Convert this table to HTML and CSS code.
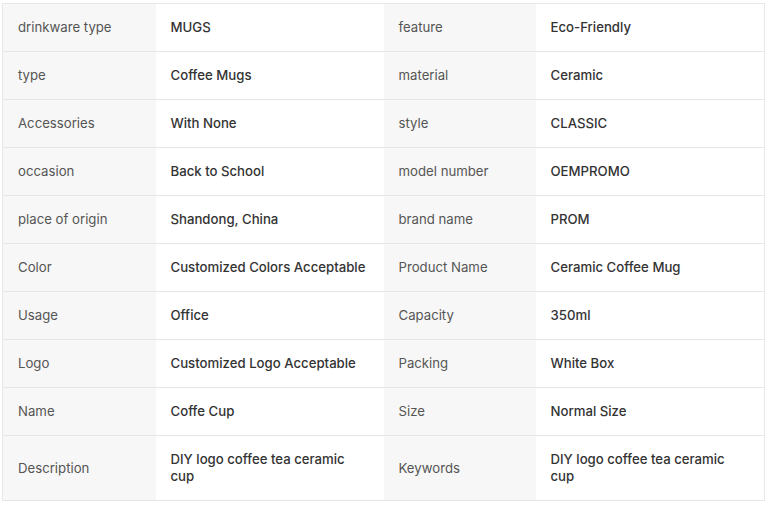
FILE: index.html
```html
<!DOCTYPE html>
<html>
<head>
<meta charset="utf-8">
<link rel="stylesheet" href="styles.css">
</head>
<body>
<table class="spec">
  <colgroup>
    <col class="c1"><col class="c2"><col class="c3"><col class="c4">
  </colgroup>
  <tbody>
    <tr><td class="lbl">drinkware type</td><td class="val">MUGS</td><td class="lbl">feature</td><td class="val">Eco-Friendly</td></tr>
    <tr><td class="lbl">type</td><td class="val">Coffee Mugs</td><td class="lbl">material</td><td class="val">Ceramic</td></tr>
    <tr><td class="lbl">Accessories</td><td class="val">With None</td><td class="lbl">style</td><td class="val">CLASSIC</td></tr>
    <tr><td class="lbl">occasion</td><td class="val">Back to School</td><td class="lbl">model number</td><td class="val">OEMPROMO</td></tr>
    <tr><td class="lbl">place of origin</td><td class="val">Shandong, China</td><td class="lbl">brand name</td><td class="val">PROM</td></tr>
    <tr><td class="lbl">Color</td><td class="val">Customized Colors Acceptable</td><td class="lbl">Product Name</td><td class="val">Ceramic Coffee Mug</td></tr>
    <tr><td class="lbl">Usage</td><td class="val">Office</td><td class="lbl">Capacity</td><td class="val">350ml</td></tr>
    <tr><td class="lbl">Logo</td><td class="val">Customized Logo Acceptable</td><td class="lbl">Packing</td><td class="val">White Box</td></tr>
    <tr><td class="lbl">Name</td><td class="val">Coffe Cup</td><td class="lbl">Size</td><td class="val">Normal Size</td></tr>
    <tr class="tall"><td class="lbl">Description</td><td class="val">DIY logo coffee tea ceramic cup</td><td class="lbl">Keywords</td><td class="val">DIY logo coffee tea ceramic cup</td></tr>
  </tbody>
</table>
</body>
</html>
```
FILE: styles.css
```css
html, body {
  background: #ffffff;
}
body {
  margin: 3px 2px 2px 2px;
  font-family: "Inter", "Liberation Sans", sans-serif;
  font-size: 13.2px;
}
.spec {
  border-collapse: collapse;
  table-layout: fixed;
  width: 762px;
  border: 1px solid #e8e8e8;
}
.c1 { width: 153px; }
.c2 { width: 228px; }
.c3 { width: 152px; }
.c4 { width: 229px; }
.spec td {
  height: 47px;
  padding: 0 14px 0 15px;
  border-bottom: 1px solid #e6e6e6;
  vertical-align: middle;
  line-height: 17px;
}
.spec tr.tall td {
  height: 64px;
}
.lbl {
  background: #f7f7f7;
  color: #555555;
  font-weight: 400;
}
.val {
  background: #ffffff;
  color: #333333;
  font-weight: 500;
}
```
